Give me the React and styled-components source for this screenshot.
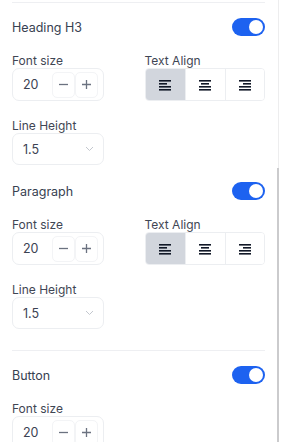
import React from "react";
import styled, { createGlobalStyle } from "styled-components";

const Global = createGlobalStyle`
  html, body { margin: 0; padding: 0; background: #ffffff; }
  body { font-family: Inter, "Noto Sans", sans-serif; color: #374151; }
  * { box-sizing: border-box; }
`;

const Page = styled.div`
  position: relative;
  width: 302px;
  height: 442px;
  overflow: hidden;
  background: #fff;
`;

const Panel = styled.div`
  width: 279px;
  min-height: 442px;
  border-right: 1px solid #ededee;
  padding: 2px 13px 0 12px;
`;

const ScrollThumb = styled.div`
  position: absolute;
  left: 277px;
  top: 168px;
  width: 2px;
  bottom: 0;
  background: #cbcbcd;
`;

const Group = styled.section`
  border-top: 1px solid #eeeff2;
  padding: 15px 0 21px;
  display: flex;
  flex-direction: column;
  gap: 17px;
`;

const Block = styled.div`
  display: flex;
  flex-direction: column;
  gap: 17px;
`;

const TitleRow = styled.div`
  display: flex;
  align-items: center;
  justify-content: space-between;
  height: 18px;
`;

const Title = styled.span`
  font-size: 12.5px;
  font-weight: 400;
  color: #374151;
`;

const Switch = styled.div`
  width: 33px;
  height: 18px;
  border-radius: 9px;
  background: #1d62f0;
  position: relative;
  &::after {
    content: "";
    position: absolute;
    top: 2px;
    right: 2px;
    width: 14px;
    height: 14px;
    border-radius: 50%;
    background: #fff;
  }
`;

const Grid = styled.div`
  display: grid;
  grid-template-columns: 1fr 1fr;
  column-gap: 12px;
`;

const Field = styled.div`
  display: flex;
  flex-direction: column;
`;

const Label = styled.div`
  font-size: 12px;
  line-height: 15px;
  color: #3f4654;
`;

const NumberBox = styled.div`
  width: 92px;
  height: 33px;
  border: 1px solid #eceef1;
  border-radius: 7px;
  display: flex;
  align-items: center;
  padding: 3px 5px 3px 10px;
`;

const NumberValue = styled.span`
  flex: 1;
  font-size: 12.5px;
  color: #3b4252;
`;

const StepButton = styled.button`
  width: 23px;
  height: 26px;
  border: 1px solid #f3f4f6;
  border-radius: 5px;
  background: #fff;
  padding: 0;
  display: flex;
  align-items: center;
  justify-content: center;
  color: #6b7280;
  font-family: inherit;
`;

const Segmented = styled.div`
  display: grid;
  grid-template-columns: repeat(3, 1fr);
  height: 33px;
  border: 1px solid #eceef1;
  border-radius: 4px;
  overflow: hidden;
`;

const Segment = styled.button`
  border: 0;
  border-left: ${(p) => (p.$first ? "0" : "1px solid #eceef1")};
  background: ${(p) => (p.$active ? "#d2d6dd" : "#fff")};
  display: flex;
  align-items: center;
  justify-content: center;
  padding: 0;
`;

const Select = styled.div`
  width: 92px;
  height: 32px;
  border: 1px solid #eceef1;
  border-radius: 7px;
  display: flex;
  align-items: center;
  justify-content: space-between;
  padding: 0 9px 0 10px;
  font-size: 12.5px;
  color: #3b4252;
`;

const AlignIcon = ({ align }) => {
  const lines = [12, 8, 12, 12];
  return (
    <svg width="12" height="12" viewBox="0 0 12 12">
      {lines.map((w, i) => {
        const x = align === "left" ? 0 : align === "right" ? 12 - w : (12 - w) / 2;
        return <rect key={i} x={x} y={1 + i * 3} width={w} height="1.6" fill="#111827" />;
      })}
    </svg>
  );
};

const Minus = () => (
  <svg width="11" height="11" viewBox="0 0 11 11">
    <path d="M1 5.5h9" stroke="#6b7280" strokeWidth="1.3" />
  </svg>
);
const Plus = () => (
  <svg width="11" height="11" viewBox="0 0 11 11">
    <path d="M1 5.5h9M5.5 1v9" stroke="#6b7280" strokeWidth="1.3" />
  </svg>
);
const Chevron = () => (
  <svg width="9" height="6" viewBox="0 0 9 6">
    <path d="M1 1l3.5 3.5L8 1" fill="none" stroke="#c3c7ce" strokeWidth="1" />
  </svg>
);

const NumberInput = ({ value }) => (
  <NumberBox>
    <NumberValue>{value}</NumberValue>
    <StepButton><Minus /></StepButton>
    <StepButton><Plus /></StepButton>
  </NumberBox>
);

const TextAlign = () => (
  <Segmented>
    <Segment $first $active><AlignIcon align="left" /></Segment>
    <Segment><AlignIcon align="center" /></Segment>
    <Segment><AlignIcon align="right" /></Segment>
  </Segmented>
);

const TextStyle = ({ title, withAlign = true, withLineHeight = true }) => (
  <Block>
    <TitleRow>
      <Title>{title}</Title>
      <Switch />
    </TitleRow>
    <Grid>
      <Field>
        <Label>Font size</Label>
        <NumberInput value="20" />
      </Field>
      {withAlign && (
        <Field>
          <Label>Text Align</Label>
          <TextAlign />
        </Field>
      )}
    </Grid>
    {withLineHeight && (
      <Field>
        <Label>Line Height</Label>
        <Select>
          <span>1.5</span>
          <Chevron />
        </Select>
      </Field>
    )}
  </Block>
);

export default function App() {
  return (
    <Page>
      <Global />
      <Panel>
        <Group>
          <TextStyle title="Heading H3" />
          <TextStyle title="Paragraph" />
        </Group>
        <Group>
          <TextStyle title="Button" withAlign={false} />
        </Group>
      </Panel>
      <ScrollThumb />
    </Page>
  );
}
